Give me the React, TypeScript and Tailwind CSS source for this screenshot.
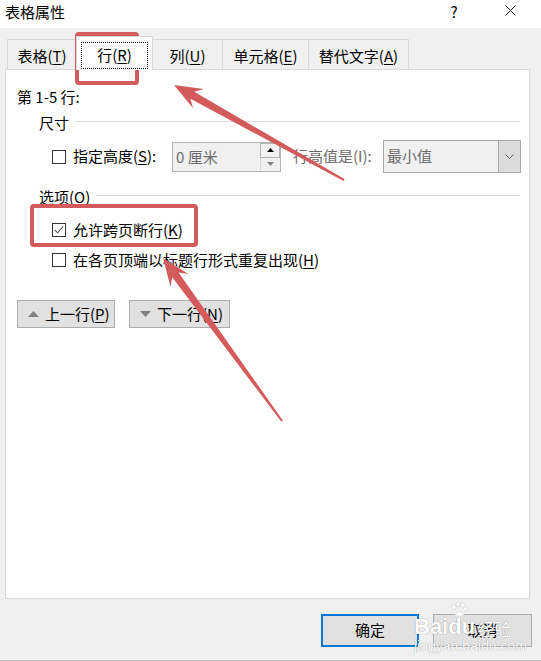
import React from 'react';

const RED = '#d35b5b';

// tapered annotation arrow, tip -> tail
const arrowPoints = (tx: number, ty: number, ex: number, ey: number) => {
  const dx = ex - tx;
  const dy = ey - ty;
  const L = Math.hypot(dx, dy);
  const ux = dx / L;
  const uy = dy / L;
  const nx = -uy;
  const ny = ux;
  const p = (d: number, w: number) => `${(tx + ux * d + nx * w).toFixed(1)},${(ty + uy * d + ny * w).toFixed(1)}`;
  return [p(0, 0), p(28, 11), p(21, 4), p(L, 1), p(L, -1), p(21, -4), p(28, -11)].join(' ');
};

const Key: React.FC<{ k: string }> = ({ k }) => <span className="underline underline-offset-2">{k}</span>;

const Checkbox: React.FC<{ checked?: boolean }> = ({ checked }) => (
  <div className="w-[14px] h-[14px] border border-[#333333] bg-white flex items-center justify-center shrink-0">
    {checked && (
      <svg width="12" height="12" viewBox="0 0 12 12">
        <path d="M1.8 6 L4.6 8.8 L10.2 2.4" fill="none" stroke="#555" strokeWidth="1.1" />
      </svg>
    )}
  </div>
);

const Tab: React.FC<{ w: string; children: React.ReactNode }> = ({ w, children }) => (
  <div className={`${w} h-[30px] border border-b-0 border-[#d9d9d9] -ml-px first:ml-0 flex items-center justify-center pt-[3px]`}>
    {children}
  </div>
);

const SectionHead: React.FC<{ children: React.ReactNode }> = ({ children }) => (
  <div className="flex items-center h-[20px] pl-[33px] pr-[9px]">
    <span className="leading-[20px]">{children}</span>
    <div className="flex-1 h-px bg-[#dcdcdc] ml-[6px] -mt-[3px]" />
  </div>
);

const App: React.FC = () => {
  return (
    <div
      className="relative w-[541px] h-[661px] bg-[#f0f0f0] overflow-hidden text-[15px] text-black border-b border-[#c4c4c4]"
      style={{ fontFamily: '"Noto Sans CJK SC", "Microsoft YaHei", sans-serif' }}
    >
      {/* title bar */}
      <div className="h-[28px] bg-white flex items-start">
        <span className="ml-[5px] leading-[23px]">表格属性</span>
        <span className="ml-auto w-[14px] text-center leading-[23px] mr-[44px]">?</span>
        <svg className="mt-[5px] mr-[25px]" width="11" height="11" viewBox="0 0 11 11">
          <path d="M0.5 0.5 L10.5 10.5 M10.5 0.5 L0.5 10.5" stroke="#222" strokeWidth="1" />
        </svg>
      </div>

      {/* tabs */}
      <div className="flex items-end pl-[7px] pt-[8px] h-[41px]">
        <Tab w="w-[70px]">
          表格(<Key k="T" />)
        </Tab>
        <div className="w-[77px] h-[34px] -ml-px bg-white border border-b-0 border-[#d9d9d9] relative z-10 -mb-px flex items-center justify-center">
          <div className="border border-dotted border-black w-[67px] h-[27px] mt-[4px] flex items-center justify-center">
            行(<Key k="R" />)
          </div>
        </div>
        <Tab w="w-[71px]">
          列(<Key k="U" />)
        </Tab>
        <Tab w="w-[87px]">
          单元格(<Key k="E" />)
        </Tab>
        <Tab w="w-[101px]">
          替代文字(<Key k="A" />)
        </Tab>
      </div>

      {/* panel */}
      <div className="ml-[5px] w-[525px] h-[530px] bg-white border border-[#d9d9d9] flex flex-col">
        <div className="pl-[11px] mt-[17px] leading-[20px] h-[20px]">第 1-5 行:</div>

        <div className="mt-[6px]">
          <SectionHead>尺寸</SectionHead>
        </div>

        <div className="mt-[7px] h-[33px] flex items-center pl-[46px]">
          <Checkbox />
          <span className="ml-[7px] w-[99px]">
            指定高度(<Key k="S" />):
          </span>
          <div className="w-[109px] h-[30px] border border-[#b4b4b4] bg-[#f0f0f0] flex">
            <span className="flex-1 pl-[3px] leading-[27px] text-[#6d6d6d]">0 厘米</span>
            <div className="w-[20px] flex flex-col">
              <div className="h-[15px] border border-[#b4b4b4] bg-[#f2f2f2] flex items-center justify-center">
                <svg width="7" height="4" viewBox="0 0 7 4">
                  <path d="M0 4 L3.5 0 L7 4 Z" fill="#000" />
                </svg>
              </div>
              <div className="flex-1 border-l border-[#d6d6d6] flex items-center justify-center">
                <svg width="7" height="4" viewBox="0 0 7 4">
                  <path d="M0 0 L7 0 L3.5 4 Z" fill="#808080" />
                </svg>
              </div>
            </div>
          </div>
          <span className="ml-[12px] w-[90px] text-[#6d6d6d]">行高值是(I):</span>
          <div className="w-[138px] h-[33px] border border-[#a8a8a8] bg-[#f0f0f0] flex">
            <span className="flex-1 pl-[3px] leading-[30px] text-[#6d6d6d]">最小值</span>
            <div className="w-[22px] bg-[#dcdcdc] border-l border-[#a8a8a8] flex items-center justify-center">
              <svg width="9" height="5" viewBox="0 0 9 5">
                <path d="M0.5 0.5 L4.5 4.5 L8.5 0.5" fill="none" stroke="#606060" strokeWidth="1" />
              </svg>
            </div>
          </div>
        </div>

        <div className="mt-[14px]">
          <SectionHead>
            选项(<Key k="O" />)
          </SectionHead>
        </div>

        <div className="mt-[13px] h-[20px] flex items-center pl-[46px]">
          <Checkbox checked />
          <span className="ml-[7px]">
            允许跨页断行(<Key k="K" />)
          </span>
        </div>
        <div className="mt-[10px] h-[20px] flex items-center pl-[46px]">
          <Checkbox />
          <span className="ml-[7px]">
            在各页顶端以标题行形式重复出现(<Key k="H" />)
          </span>
        </div>

        <div className="mt-[30px] flex gap-[14px] pl-[11px]">
          <button className="w-[98px] h-[28px] bg-[#e1e1e1] border border-[#adadad] flex items-center pl-[10px] gap-[6px]">
            <svg width="11" height="6" viewBox="0 0 11 6">
              <path d="M0 6 L5.5 0 L11 6 Z" fill="#808080" />
            </svg>
            <span>
              上一行(<Key k="P" />)
            </span>
          </button>
          <button className="w-[101px] h-[28px] bg-[#e1e1e1] border border-[#adadad] flex items-center pl-[10px] gap-[6px]">
            <svg width="11" height="6" viewBox="0 0 11 6">
              <path d="M0 0 L11 0 L5.5 6 Z" fill="#808080" />
            </svg>
            <span>
              下一行(<Key k="N" />)
            </span>
          </button>
        </div>
      </div>

      {/* footer buttons */}
      <div className="mt-[15px] flex justify-end gap-[14px] pr-[9px]">
        <button className="w-[98px] h-[33px] bg-[#e1e1e1] border-2 border-[#0078d7]">确定</button>
        <button className="w-[99px] h-[33px] bg-[#e1e1e1] border border-[#adadad]">取消</button>
      </div>

      {/* watermark */}
      <div
        className="absolute left-[414px] top-[616px] text-white pointer-events-none leading-none"
        style={{ textShadow: '0 0 1px rgba(0,0,0,0.3), 0 0 1px rgba(0,0,0,0.2)' }}
      >
        <div className="flex items-end">
          <span className="text-[22px] font-bold" style={{ fontFamily: 'Arial, "Liberation Sans", sans-serif' }}>
            Bai
          </span>
          <span className="relative text-[22px] font-bold" style={{ fontFamily: 'Arial, "Liberation Sans", sans-serif' }}>
            du
            <svg className="absolute left-[2px] -top-[14px]" width="18" height="16" viewBox="0 0 18 16">
              <g fill="#ffffff" stroke="#cfcfcf" strokeWidth="0.6">
                <ellipse cx="4" cy="5" rx="2" ry="2.6" />
                <ellipse cx="8" cy="2.6" rx="2" ry="2.4" />
                <ellipse cx="12.5" cy="3" rx="2" ry="2.4" />
                <ellipse cx="15.5" cy="7" rx="1.8" ry="2.3" />
                <path d="M5 13 Q9 5 14 13 Q9 16 5 13 Z" />
              </g>
            </svg>
          </span>
          <span className="text-[17px] ml-[2px] mb-[1px]">经验</span>
        </div>
        <div className="text-[14px] mt-[1px]" style={{ fontFamily: 'Arial, "Liberation Sans", sans-serif' }}>
          jingyan.baidu.com
        </div>
      </div>

      {/* annotations */}
      <svg className="absolute inset-0 pointer-events-none" width="541" height="661" viewBox="0 0 541 661">
        <rect x="77" y="34" width="60" height="49" rx="2" fill="none" stroke={RED} strokeWidth="4" />
        <rect x="32" y="206" width="164" height="39" rx="2" fill="none" stroke={RED} strokeWidth="4" />
        <polygon points={arrowPoints(174, 85, 344, 180)} fill={RED} />
        <polygon points={arrowPoints(163, 258, 282, 421)} fill={RED} />
      </svg>
    </div>
  );
};

export default App;
